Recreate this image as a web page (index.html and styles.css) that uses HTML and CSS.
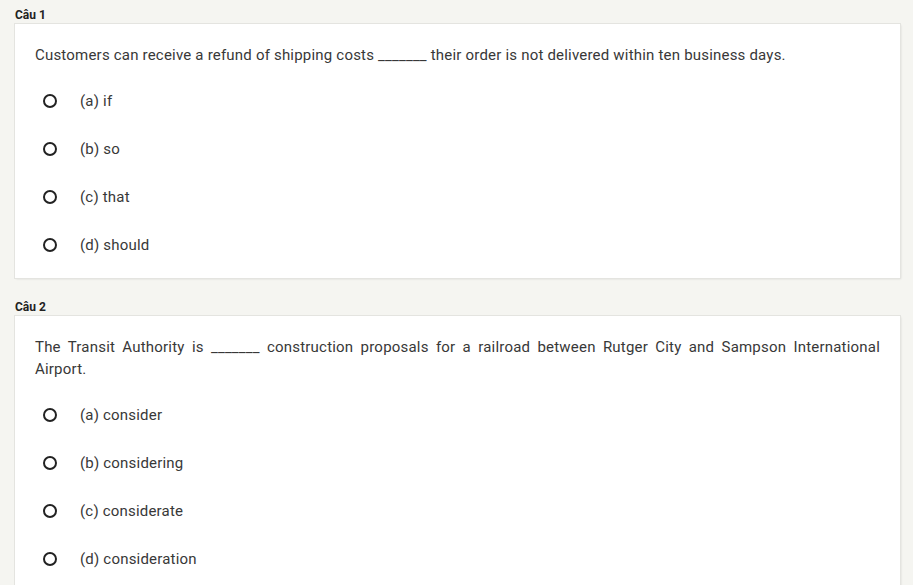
FILE: index.html
```html
<!DOCTYPE html>
<html>
<head>
<meta charset="utf-8">
<link rel="stylesheet" href="styles.css">
</head>
<body>
<div class="page">
  <section class="question">
    <div class="q-title">Câu 1</div>
    <div class="card">
      <p class="q-text">Customers can receive a refund of shipping costs _______ their order is not delivered within ten business days.</p>
      <ul class="options">
        <li class="option"><span class="radio"></span><span class="label">(a) if</span></li>
        <li class="option"><span class="radio"></span><span class="label">(b) so</span></li>
        <li class="option"><span class="radio"></span><span class="label">(c) that</span></li>
        <li class="option"><span class="radio"></span><span class="label">(d) should</span></li>
      </ul>
    </div>
  </section>
  <section class="question">
    <div class="q-title">Câu 2</div>
    <div class="card">
      <p class="q-text">The Transit Authority is _______ construction proposals for a railroad between Rutger City and Sampson International Airport.</p>
      <ul class="options">
        <li class="option"><span class="radio"></span><span class="label">(a) consider</span></li>
        <li class="option"><span class="radio"></span><span class="label">(b) considering</span></li>
        <li class="option"><span class="radio"></span><span class="label">(c) considerate</span></li>
        <li class="option"><span class="radio"></span><span class="label">(d) consideration</span></li>
      </ul>
    </div>
  </section>
</div>
</body>
</html>
```
FILE: styles.css
```css
html, body {
  margin: 0;
  padding: 0;
  background: #f5f5f1;
  font-family: Roboto, "Liberation Sans", sans-serif;
  color: #333;
}
.page {
  padding: 7px 13px 0 15px;
  display: flex;
  flex-direction: column;
  gap: 21px;
}
.q-title {
  font-size: 12px;
  font-weight: bold;
  color: #222;
  line-height: 16px;
  margin-bottom: 1px;
}
.card {
  background: #fff;
  box-shadow: 0 0 0 1px #e4e4e0, 1px 1px 2px rgba(0,0,0,0.12);
  padding: 20px 20px 9px 20px;
}
.q-text {
  margin: 0;
  font-size: 15px;
  line-height: 22px;
  letter-spacing: 0.2px;
  text-align: justify;
  color: #383838;
}
.options {
  list-style: none;
  margin: 11px 0 0 0;
  padding: 0;
}
.option {
  display: flex;
  align-items: center;
  height: 48px;
}
.radio {
  width: 10px;
  height: 10px;
  border: 2px solid #222;
  border-radius: 50%;
  margin-left: 8px;
  margin-right: 23px;
}
.label {
  font-size: 15px;
  letter-spacing: 0.2px;
  color: #383838;
}
```
